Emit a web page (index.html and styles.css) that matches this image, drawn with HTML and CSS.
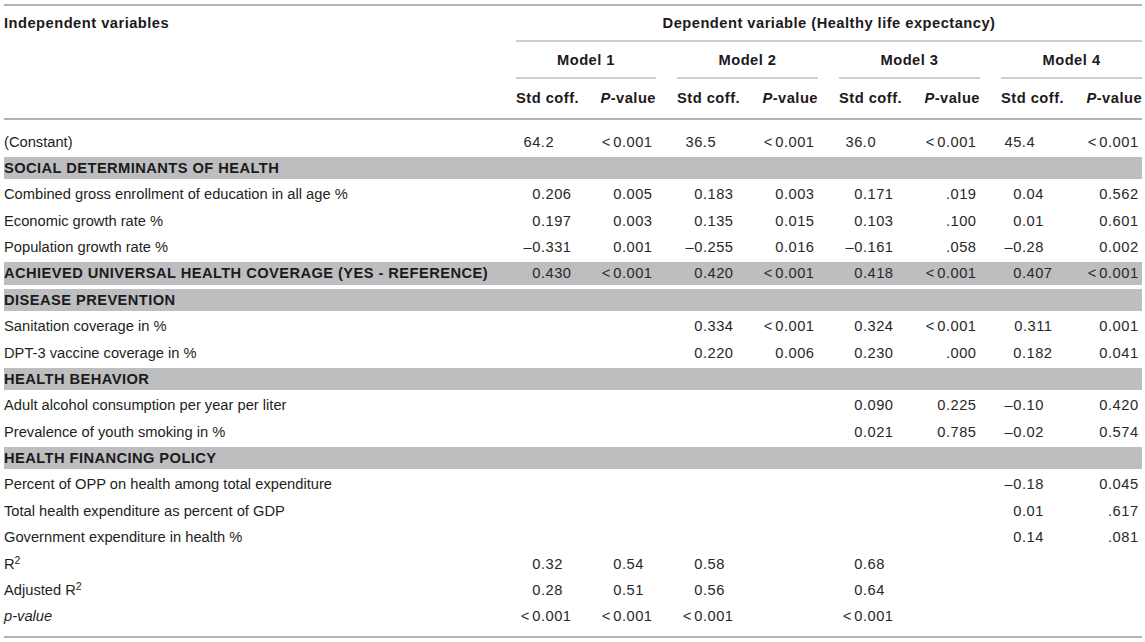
FILE: index.html
```html
<!DOCTYPE html>
<html>
<head>
<meta charset="utf-8">
<link rel="stylesheet" href="styles.css">
</head>
<body>
<div class="page">
<table class="reg">
<colgroup>
<col class="c-label"><col class="c-s1"><col class="c-p1"><col class="c-s2"><col class="c-p2"><col class="c-s3"><col class="c-p3"><col class="c-s4"><col class="c-p4">
</colgroup>
<thead>
<tr class="h1">
<th rowspan="3" class="indep">Independent variables</th>
<th colspan="8" class="dep">Dependent variable (Healthy life expectancy)</th>
</tr>
<tr class="h2">
<th colspan="2" class="model m1"><div>Model 1</div></th>
<th colspan="2" class="model"><div>Model 2</div></th>
<th colspan="2" class="model"><div>Model 3</div></th>
<th colspan="2" class="model"><div>Model 4</div></th>
</tr>
<tr class="h3">
<th class="sc m1">Std coff.</th><th class="pv"><i>P</i>-value</th>
<th class="sc">Std coff.</th><th class="pv"><i>P</i>-value</th>
<th class="sc">Std coff.</th><th class="pv"><i>P</i>-value</th>
<th class="sc">Std coff.</th><th class="pv"><i>P</i>-value</th>
</tr>
</thead>
<tbody>
<tr class="first">
<td class="lab">(Constant)</td>
<td class="s d1">64.2</td><td class="p"><span class="lt">&lt;</span>0.001</td>
<td class="s d1">36.5</td><td class="p"><span class="lt">&lt;</span>0.001</td>
<td class="s d1">36.0</td><td class="p"><span class="lt">&lt;</span>0.001</td>
<td class="s d1">45.4</td><td class="p"><span class="lt">&lt;</span>0.001</td>
</tr>
<tr class="sec"><td colspan="9" class="lab">SOCIAL DETERMINANTS OF HEALTH</td></tr>
<tr>
<td class="lab">Combined gross enrollment of education in all age %</td>
<td class="s">0.206</td><td class="p">0.005</td>
<td class="s">0.183</td><td class="p">0.003</td>
<td class="s">0.171</td><td class="p">.019</td>
<td class="s d2">0.04</td><td class="p">0.562</td>
</tr>
<tr>
<td class="lab">Economic growth rate %</td>
<td class="s">0.197</td><td class="p">0.003</td>
<td class="s">0.135</td><td class="p">0.015</td>
<td class="s">0.103</td><td class="p">.100</td>
<td class="s d2">0.01</td><td class="p">0.601</td>
</tr>
<tr>
<td class="lab">Population growth rate %</td>
<td class="s">–0.331</td><td class="p">0.001</td>
<td class="s">–0.255</td><td class="p">0.016</td>
<td class="s">–0.161</td><td class="p">.058</td>
<td class="s d2">–0.28</td><td class="p">0.002</td>
</tr>
<tr class="sec">
<td class="lab">ACHIEVED UNIVERSAL HEALTH COVERAGE (YES - REFERENCE)</td>
<td class="s">0.430</td><td class="p"><span class="lt">&lt;</span>0.001</td>
<td class="s">0.420</td><td class="p"><span class="lt">&lt;</span>0.001</td>
<td class="s">0.418</td><td class="p"><span class="lt">&lt;</span>0.001</td>
<td class="s">0.407</td><td class="p"><span class="lt">&lt;</span>0.001</td>
</tr>
<tr class="sec"><td colspan="9" class="lab">DISEASE PREVENTION</td></tr>
<tr>
<td class="lab">Sanitation coverage in %</td>
<td class="s"></td><td class="p"></td>
<td class="s">0.334</td><td class="p"><span class="lt">&lt;</span>0.001</td>
<td class="s">0.324</td><td class="p"><span class="lt">&lt;</span>0.001</td>
<td class="s">0.311</td><td class="p">0.001</td>
</tr>
<tr>
<td class="lab">DPT-3 vaccine coverage in %</td>
<td class="s"></td><td class="p"></td>
<td class="s">0.220</td><td class="p">0.006</td>
<td class="s">0.230</td><td class="p">.000</td>
<td class="s">0.182</td><td class="p">0.041</td>
</tr>
<tr class="sec"><td colspan="9" class="lab">HEALTH BEHAVIOR</td></tr>
<tr>
<td class="lab">Adult alcohol consumption per year per liter</td>
<td class="s"></td><td class="p"></td>
<td class="s"></td><td class="p"></td>
<td class="s">0.090</td><td class="p">0.225</td>
<td class="s d2">–0.10</td><td class="p">0.420</td>
</tr>
<tr>
<td class="lab">Prevalence of youth smoking in %</td>
<td class="s"></td><td class="p"></td>
<td class="s"></td><td class="p"></td>
<td class="s">0.021</td><td class="p">0.785</td>
<td class="s d2">–0.02</td><td class="p">0.574</td>
</tr>
<tr class="sec"><td colspan="9" class="lab">HEALTH FINANCING POLICY</td></tr>
<tr>
<td class="lab">Percent of OPP on health among total expenditure</td>
<td class="s"></td><td class="p"></td>
<td class="s"></td><td class="p"></td>
<td class="s"></td><td class="p"></td>
<td class="s d2">–0.18</td><td class="p">0.045</td>
</tr>
<tr>
<td class="lab">Total health expenditure as percent of GDP</td>
<td class="s"></td><td class="p"></td>
<td class="s"></td><td class="p"></td>
<td class="s"></td><td class="p"></td>
<td class="s d2">0.01</td><td class="p">.617</td>
</tr>
<tr>
<td class="lab">Government expenditure in health %</td>
<td class="s"></td><td class="p"></td>
<td class="s"></td><td class="p"></td>
<td class="s"></td><td class="p"></td>
<td class="s d2">0.14</td><td class="p">.081</td>
</tr>
<tr>
<td class="lab">R<sup>2</sup></td>
<td class="s d2">0.32</td><td class="p d2">0.54</td>
<td class="s d2">0.58</td><td class="p"></td>
<td class="s d2">0.68</td><td class="p"></td>
<td class="s"></td><td class="p"></td>
</tr>
<tr>
<td class="lab">Adjusted R<sup>2</sup></td>
<td class="s d2">0.28</td><td class="p d2">0.51</td>
<td class="s d2">0.56</td><td class="p"></td>
<td class="s d2">0.64</td><td class="p"></td>
<td class="s"></td><td class="p"></td>
</tr>
<tr class="last">
<td class="lab"><i>p-value</i></td>
<td class="s"><span class="lt">&lt;</span>0.001</td><td class="p"><span class="lt">&lt;</span>0.001</td>
<td class="s"><span class="lt">&lt;</span>0.001</td><td class="p"></td>
<td class="s"><span class="lt">&lt;</span>0.001</td><td class="p"></td>
<td class="s"></td><td class="p"></td>
</tr>
</tbody>
</table>
</div>
</body>
</html>
```

FILE: styles.css
```css
html, body {
  margin: 0;
  padding: 0;
  background: #ffffff;
}

.page {
  padding: 4px 3px 0 4px;
  font-family: "Liberation Sans", Arial, sans-serif;
  font-size: 14.7px;
  line-height: 16px;
  color: #231f20;
}

.reg {
  border-collapse: separate;
  border-spacing: 0;
  table-layout: fixed;
  width: 1138px;
  border-top: 2px solid #b1b2b4;
  border-bottom: 2px solid #b1b2b4;
}

.c-label { width: 512px; }
.c-s1 { width: 71px; }
.c-p1 { width: 69px; }
.c-s2 { width: 93px; }
.c-p2 { width: 69px; }
.c-s3 { width: 91px; }
.c-p3 { width: 71px; }
.c-s4 { width: 88px; }
.c-p4 { width: 74px; }

th {
  font-weight: bold;
  letter-spacing: 0.48px;
  padding: 0;
  white-space: nowrap;
  color: #1c1a1b;
}

th i { font-style: italic; }

.indep {
  text-align: left;
  vertical-align: top;
  padding-top: 9px;
  border-bottom: 2px solid #b1b2b4;
}

.dep {
  text-align: center;
  vertical-align: top;
  padding: 9px 0 9px 0;
  border-bottom: 2px solid #cdced0;
}

.model {
  padding: 0 0 0 21px;
  vertical-align: top;
}

.model.m1 { padding-left: 0; }

.model div {
  text-align: center;
  padding: 10px 0 9px 0;
  border-bottom: 2px solid #cdced0;
}

.h3 th {
  padding-top: 11px;
  padding-bottom: 12px;
  border-bottom: 2px solid #b1b2b4;
  vertical-align: top;
}

.h3 .sc {
  text-align: left;
  padding-left: 21px;
}

.h3 .sc.m1 { padding-left: 0; }

.h3 .pv { text-align: right; }

td {
  padding: 5.2px 0;
  white-space: nowrap;
  vertical-align: middle;
}

td.lab { text-align: left; }

td.s, td.p {
  text-align: right;
  letter-spacing: 0.5px;
  color: #2a2728;
}

td.s { padding-right: 15.5px; }
td.p { padding-right: 3.5px; }

td.s.d2 { padding-right: 24.2px; }
td.s.d1 { padding-right: 32.9px; }
td.p.d2 { padding-right: 12.2px; }

.lt {
  margin-right: 2.5px;
}

tr.first td {
  padding-top: 13.6px;
}

tr.last td {
  padding-bottom: 11.9px;
}

tr.sec td {
  background: #bcbec0;
  background-clip: padding-box;
  border-top: 2px solid #ffffff;
  border-bottom: 2px solid #ffffff;
  padding-top: 3.2px;
  padding-bottom: 3.2px;
}

tr.sec td.lab {
  font-weight: bold;
  letter-spacing: 0.42px;
  color: #1c1a1b;
}

sup {
  font-size: 10.5px;
  line-height: 0;
  vertical-align: 5px;
}
```
